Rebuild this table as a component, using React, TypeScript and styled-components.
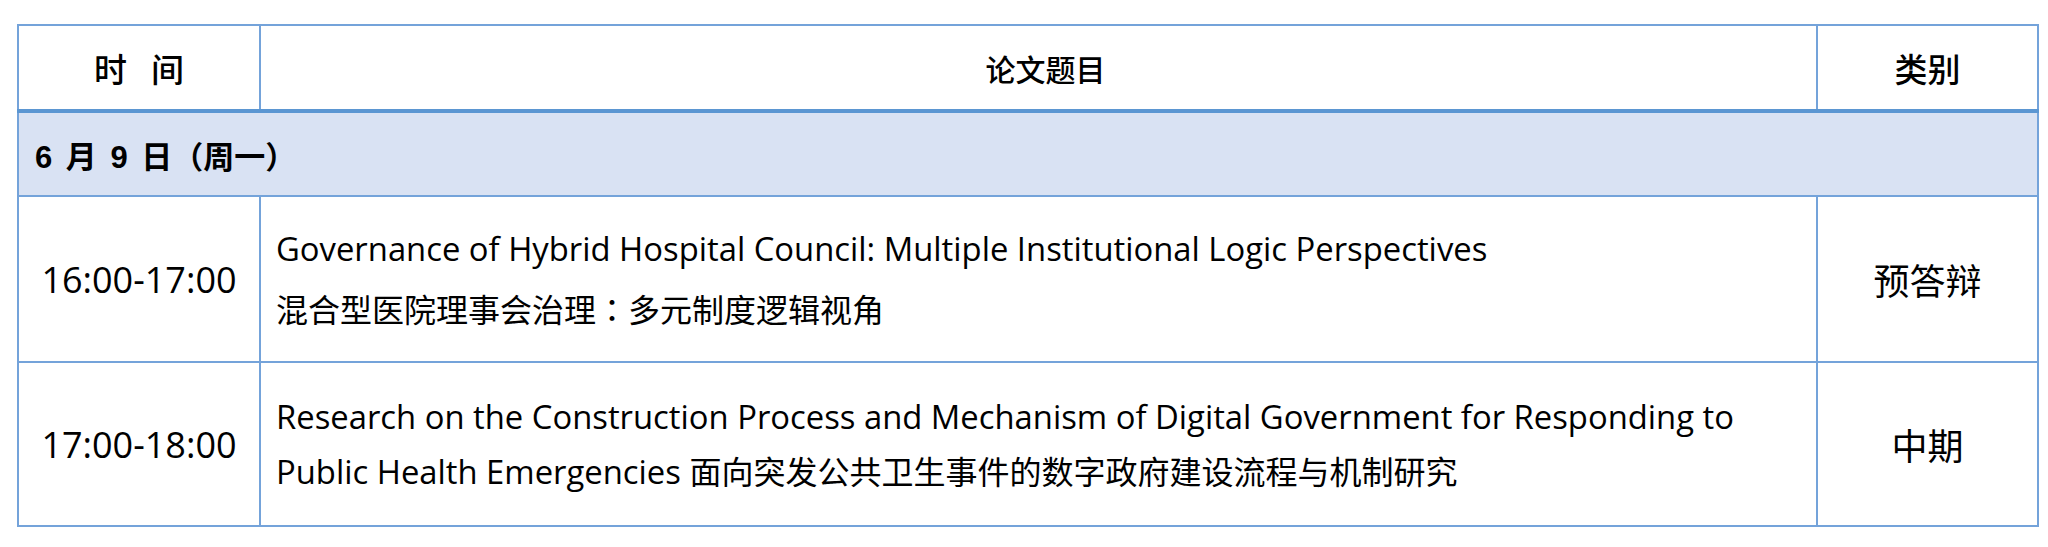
import React from "react";
import styled, { createGlobalStyle } from "styled-components";

const lineColor = "#74a3da";
const thickColor = "#5b96d2";

const GlobalStyle = createGlobalStyle`
  html, body {
    margin: 0;
    background: #fff;
  }
  body {
    font-family: "Open Sans", "Noto Sans CJK SC", sans-serif;
    color: #000;
  }
`;

const Page = styled.div`
  padding: 24px 17px 0 17px;
`;

const Table = styled.table`
  width: 2014px;
  border-collapse: collapse;
  table-layout: fixed;
`;

const HeadCell = styled.th<{ $w: number; $size: number; $shift?: number }>`
  width: ${(p) => p.$w}px;
  height: 83px;
  padding: 0;
  border: 2px solid ${lineColor};
  border-bottom: 4px solid ${thickColor};
  font-family: "Noto Sans CJK SC", sans-serif;
  font-weight: 500;
  font-size: ${(p) => p.$size}px;
  text-align: center;
  text-indent: ${(p) => p.$shift ?? 0}px;
  word-spacing: 0.5em;
`;

const DayCell = styled.td`
  height: 82px;
  padding: 0 0 0 16px;
  border: 2px solid ${lineColor};
  background: #d9e2f3;
  font-family: "Liberation Sans", "Noto Sans CJK SC", sans-serif;
  font-weight: 700;
  font-size: 31px;
  word-spacing: 5px;
`;

const Cell = styled.td<{ $h: number }>`
  height: ${(p) => p.$h}px;
  padding: 0;
  border: 2px solid ${lineColor};
  vertical-align: middle;
`;

const TimeCell = styled(Cell)`
  text-align: center;
  font-size: 36px;
`;

const TitleCell = styled(Cell)`
  padding: 0 15px;
  font-size: 32.8px;
`;

const Paragraph = styled.p<{ $after: number }>`
  margin: 0 0 ${(p) => p.$after}px;
  line-height: 55px;
`;

const Zh = styled.span`
  font-family: "Noto Sans CJK SC", sans-serif;
  font-size: 32px;
  line-height: 1;
`;

const Colon = styled.span`
  font-family: "Noto Sans CJK TC", sans-serif;
`;

const KindCell = styled(Cell)`
  text-align: center;
  font-family: "Noto Sans CJK SC", sans-serif;
  font-size: 36px;
`;

type Para = { en?: string; zh?: string };

const sessions: { time: string; paras: Para[]; kind: string; h: number }[] = [
  {
    time: "16:00-17:00",
    paras: [
      { en: "Governance of Hybrid Hospital Council: Multiple Institutional Logic Perspectives" },
      { zh: "混合型医院理事会治理：多元制度逻辑视角" },
    ],
    kind: "预答辩",
    h: 164,
  },
  {
    time: "17:00-18:00",
    paras: [
      {
        en: "Research on the Construction Process and Mechanism of Digital Government for Responding to Public Health Emergencies ",
        zh: "面向突发公共卫生事件的数字政府建设流程与机制研究",
      },
    ],
    kind: "中期",
    h: 162,
  },
];

const renderZh = (text: string) =>
  text.split("：").map((part, i) => (
    <React.Fragment key={i}>
      {i > 0 && <Colon>：</Colon>}
      {part}
    </React.Fragment>
  ));

const App: React.FC = () => {
  return (
    <Page>
      <GlobalStyle />
      <Table>
        <thead>
          <tr>
            <HeadCell $w={240} $size={33}>时 间</HeadCell>
            <HeadCell $w={1555} $size={30} $shift={14}>论文题目</HeadCell>
            <HeadCell $w={219} $size={33}>类别</HeadCell>
          </tr>
        </thead>
        <tbody>
          <tr>
            <DayCell colSpan={3}>6 月 9 日（周一）</DayCell>
          </tr>
          {sessions.map((s) => (
            <tr key={s.time}>
              <TimeCell $h={s.h}>{s.time}</TimeCell>
              <TitleCell $h={s.h}>
                {s.paras.map((p, i) => (
                  <Paragraph key={i} $after={i < s.paras.length - 1 ? 6 : 0}>
                    {p.en}
                    {p.zh && <Zh>{renderZh(p.zh)}</Zh>}
                  </Paragraph>
                ))}
              </TitleCell>
              <KindCell $h={s.h}>{s.kind}</KindCell>
            </tr>
          ))}
        </tbody>
      </Table>
    </Page>
  );
};

export default App;
